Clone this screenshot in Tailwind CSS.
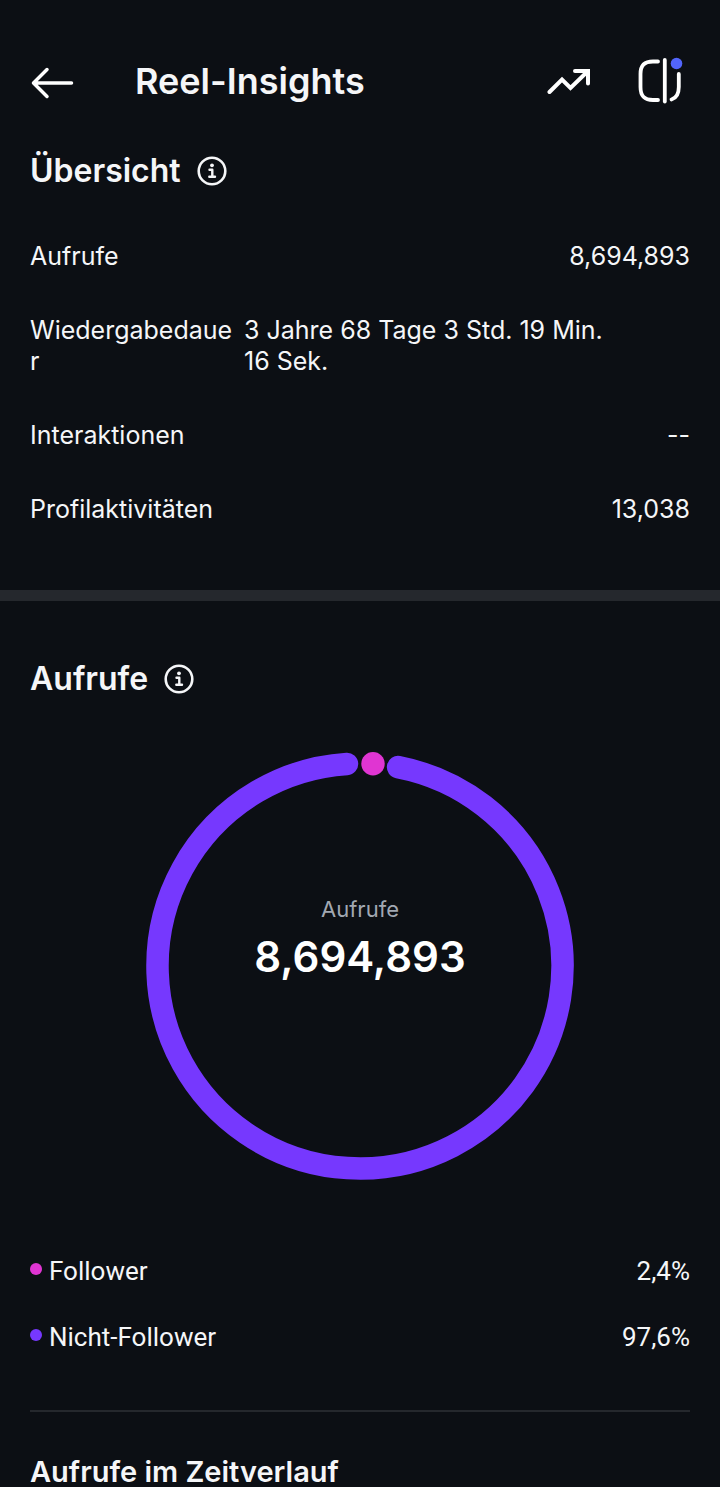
<!DOCTYPE html>
<html lang="de">
<head>
    <meta charset="UTF-8">
    <meta name="viewport" content="width=device-width, initial-scale=1.0">
    <title>Reel-Insights</title>
    <script src="https://cdn.jsdelivr.net/npm/@tailwindcss/browser@4"></script>
</head>
<body class="bg-[#0c0f14] min-h-screen font-['Inter',sans-serif] text-[#f5f6f8]">
    <header class="flex items-center px-[30px] pt-[59px]">
        <a href="#" aria-label="Zurück" class="mr-[61px]">
            <svg class="w-11 h-11" viewBox="0 0 44 44" fill="none" stroke="#fff" stroke-width="3.500" stroke-linecap="round" stroke-linejoin="round">
                <path d="M41.500 24H3.500M17 10.500 3.500 24 17 37.500"/>
            </svg>
        </a>
        <h1 class="flex-1 text-[36px] leading-[44px] font-semibold">Reel-Insights</h1>
        <button type="button" aria-label="Trend" class="mr-[46px]">
            <svg class="w-11 h-11" viewBox="0 0 44 44" fill="none" stroke="#fff" stroke-width="4" stroke-linecap="round" stroke-linejoin="miter">
                <path d="M3.500 33 16 20.500 24.500 29 42 12"/>
                <path d="M29 12H42V24.500"/>
            </svg>
        </button>
        <button type="button" aria-label="Vergleichen">
            <svg class="w-[54px] h-11 overflow-visible" viewBox="0 0 54 44" fill="none" stroke="#fff" stroke-width="3.800" stroke-linecap="round">
                <path d="M22 2.500H17C8 2.500 4.500 6.500 4.500 15V28C4.500 37 8 41 17 41H22"/>
                <path d="M28.800 1V42.500"/>
                <path d="M42.800 15V28C42.800 35.500 40.500 39 35.500 40.500"/>
                <circle cx="40.500" cy="4.500" r="5.800" fill="#5265fb" stroke="none"/>
            </svg>
        </button>
    </header>

    <main>
        <section class="px-[30px] pt-12 pb-[65px]">
            <div class="flex items-center gap-4">
                <h2 class="text-[32px] leading-10 font-semibold">Übersicht</h2>
                <button type="button" aria-label="Info zur Übersicht">
                    <svg class="w-[30px] h-[30px]" viewBox="0 0 30 30" fill="none" stroke="#f5f6f8">
                        <circle cx="15" cy="15" r="13.300" stroke-width="2.600"/>
                        <circle cx="15" cy="9.300" r="1.900" fill="#f5f6f8" stroke="none"/>
                        <path d="M12.500 13.700H15.300V20.800M12.300 20.800H18" stroke-width="2.400" stroke-linecap="round" stroke-linejoin="round"/>
                    </svg>
                </button>
            </div>
            <dl class="mt-[50px] flex flex-col gap-[43px] text-[25px] leading-[31px]">
                <div class="flex justify-between">
                    <dt>Aufrufe</dt>
                    <dd>8,694,893</dd>
                </div>
                <div class="flex gap-2">
                    <dt class="w-[206px] shrink-0">Wiedergabedaue<wbr>r</dt>
                    <dd>3 Jahre 68 Tage 3 Std. 19 Min. <span class="inline-block">16 Sek.</span></dd>
                </div>
                <div class="flex justify-between">
                    <dt>Interaktionen</dt>
                    <dd>--</dd>
                </div>
                <div class="flex justify-between">
                    <dt>Profilaktivitäten</dt>
                    <dd>13,038</dd>
                </div>
            </dl>
        </section>

        <div class="h-[11px] bg-[#25282d]"></div>

        <section class="px-[30px] pt-[58px]">
            <div class="flex items-center gap-4">
                <h2 class="text-[32px] leading-10 font-semibold">Aufrufe</h2>
                <button type="button" aria-label="Info zu Aufrufen">
                    <svg class="w-[30px] h-[30px]" viewBox="0 0 30 30" fill="none" stroke="#f5f6f8">
                        <circle cx="15" cy="15" r="13.300" stroke-width="2.600"/>
                        <circle cx="15" cy="9.300" r="1.900" fill="#f5f6f8" stroke="none"/>
                        <path d="M12.500 13.700H15.300V20.800M12.300 20.800H18" stroke-width="2.400" stroke-linecap="round" stroke-linejoin="round"/>
                    </svg>
                </button>
            </div>

            <!-- Donut chart -->
            <div class="mt-[53px] grid place-items-center">
                <svg class="col-start-1 row-start-1 w-[428px] h-[428px] overflow-visible" viewBox="0 0 428 428" fill="none" stroke-width="22.500" stroke-linecap="round">
                    <path d="M252.100 15.100A202.500 202.500 0 1 1 201 11.900" stroke="#7638fe"/>
                    <circle cx="227" cy="11.800" r="11.700" fill="#e035d2"/>
                </svg>
                <div class="col-start-1 row-start-1 pb-[54px] text-center">
                    <p class="text-[22px] leading-8 text-[#a2a8b2]">Aufrufe</p>
                    <p class="mt-1 text-[42px] leading-[56px] font-semibold text-white">8,694,893</p>
                </div>
            </div>

            <ul class="mt-[75px] flex flex-col gap-[34px] font-['Roboto',sans-serif] text-[26px] leading-8">
                <li class="flex items-center">
                    <span class="w-3 h-3 mr-[7px] mb-1 rounded-full bg-[#e035d2]"></span>
                    <span class="flex-1">Follower</span>
                    <span>2,4%</span>
                </li>
                <li class="flex items-center">
                    <span class="w-3 h-3 mr-[7px] mb-1 rounded-full bg-[#7638fe]"></span>
                    <span class="flex-1">Nicht-Follower</span>
                    <span>97,6%</span>
                </li>
            </ul>

            <hr class="mt-[57px] border-t-2 border-[#25282d]">
            <h2 class="mt-[45px] text-[29px] leading-[30px] font-semibold">Aufrufe im Zeitverlauf</h2>
        </section>
    </main>
</body>
</html>
